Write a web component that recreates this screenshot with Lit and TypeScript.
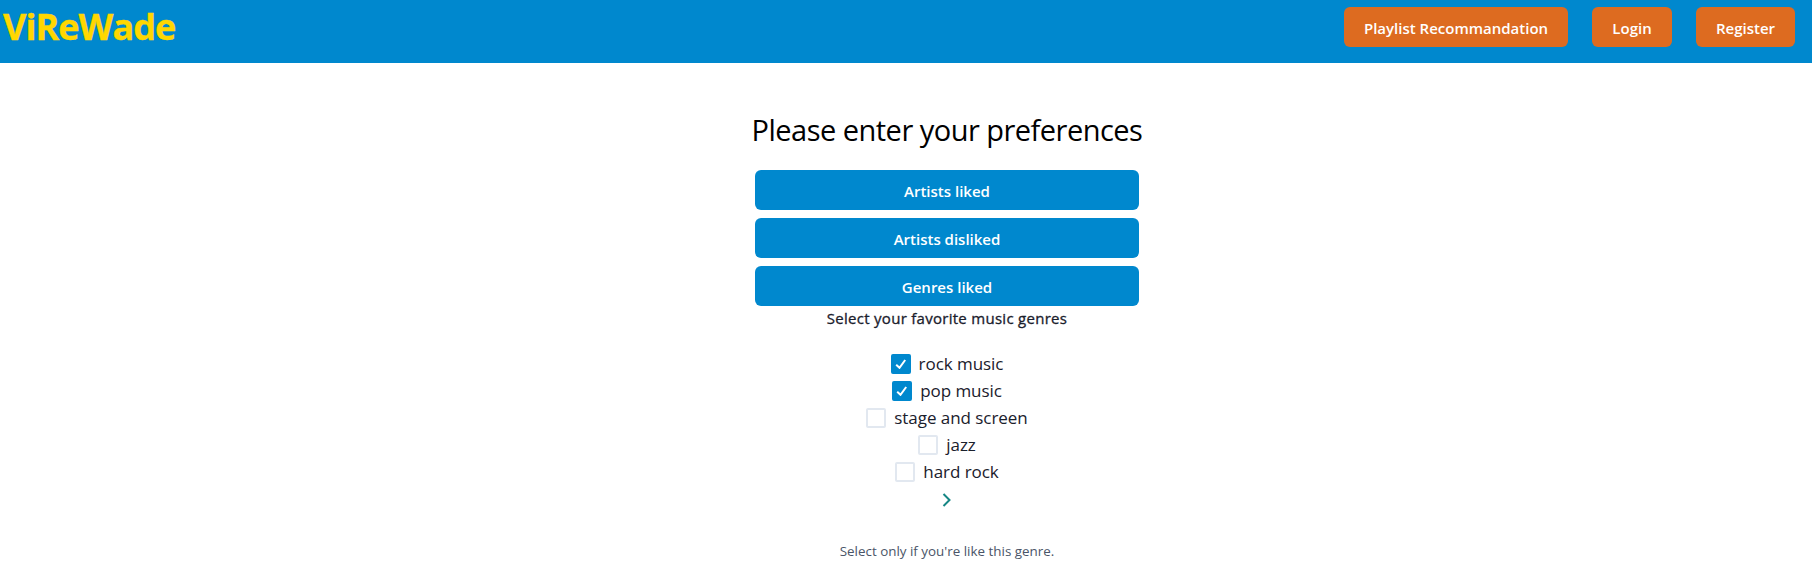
import { LitElement, html, css } from "lit";
import { customElement, property, state } from "lit/decorators.js";

@customElement("genre-checkbox")
export class GenreCheckbox extends LitElement {
  @property() label = "";
  @property({ type: Boolean, reflect: true }) checked = false;

  static styles = css`
    :host { display: block; height: 27px; }
    .row { display: inline-flex; align-items: center; height: 27px; cursor: pointer; }
    .box {
      box-sizing: border-box; width: 20px; height: 20px; flex: none;
      border: 2px solid #e2e8f0; border-radius: 2px;
      display: flex; align-items: center; justify-content: center;
    }
    :host([checked]) .box { background: #0088ce; border-color: #0088ce; }
    .tick { display: block; width: 12px; height: 10px; }
    .label { margin-left: 8px; font-size: 17px; line-height: 27px; letter-spacing: -0.05px; white-space: nowrap; color: #1a202c; }
  `;

  render() {
    return html`<label class="row" @click=${() => (this.checked = !this.checked)}>
      <span class="box">${this.checked
        ? html`<svg class="tick" viewBox="0 0 12 10" fill="none" stroke="#fff" stroke-width="2"><polyline points="1.2 5.8 4.5 8.8 10.2 1"></polyline></svg>`
        : null}</span><span class="label">${this.label}</span>
    </label>`;
  }
}

@customElement("app-root")
export class AppRoot extends LitElement {
  @state() private genres = [
    { name: "rock music", on: true },
    { name: "pop music", on: true },
    { name: "stage and screen", on: false },
    { name: "jazz", on: false },
    { name: "hard rock", on: false },
  ];

  static styles = css`
    :host {
      display: block; height: 580px; overflow: hidden; background: #fff; color: #1a202c;
      font-family: "Segoe UI", "Open Sans", sans-serif;
    }
    .bar {
      box-sizing: border-box; height: 63px; padding: 7px 17px 0 3px; background: #0088ce;
      display: flex; justify-content: space-between; align-items: flex-start;
    }
    .brand {
      font-size: 36px; line-height: 40px; font-weight: 700; letter-spacing: -0.95px; color: #ffd700;
      -webkit-text-stroke: 0.4px currentColor;
    }
    .nav { display: flex; gap: 24px; }
    button {
      font-family: inherit; font-size: 15px; font-weight: 600; line-height: 19px; color: #fff;
      border: 0; border-radius: 6px; height: 40px; padding: 2px 0 0; white-space: nowrap;
    }
    .nav button { background: #dd6b20; }
    .wide { width: 224px; }
    .login { width: 80px; }
    .register { width: 99px; }
    .main { margin-left: 82px; display: flex; flex-direction: column; align-items: center; }
    h1 { margin: 44px 0 0; font-size: 29px; line-height: 45px; font-weight: 400; letter-spacing: -0.52px; color: #000; white-space: nowrap; }
    .stack { display: flex; flex-direction: column; gap: 8px; width: 384px; margin-top: 18px; }
    .stack button { background: #0088ce; }
    .legend {
      font-size: 15px; line-height: 24px; font-weight: 500; letter-spacing: 0.28px;
      -webkit-text-stroke: 0.3px currentColor; white-space: nowrap;
    }
    .genres { margin-top: 20px; text-align: center; }
    .next { display: block; width: 24px; height: 24px; margin-top: 3px; }
    .hint { margin-top: 29px; font-size: 13.4px; line-height: 20px; color: #4a5568; white-space: nowrap; }
  `;

  render() {
    return html`
      <header class="bar">
        <div class="brand">ViReWade</div>
        <nav class="nav">
          <button class="wide">Playlist Recommandation</button>
          <button class="login">Login</button>
          <button class="register">Register</button>
        </nav>
      </header>
      <main class="main">
        <h1>Please enter your preferences</h1>
        <div class="stack">
          <button>Artists liked</button>
          <button>Artists disliked</button>
          <button>Genres liked</button>
        </div>
        <div class="legend">Select your favorite music genres</div>
        <div class="genres">
          ${this.genres.map((g) => html`<genre-checkbox .label=${g.name} ?checked=${g.on}></genre-checkbox>`)}
        </div>
        <svg class="next" viewBox="0 0 24 24" fill="none" stroke="#158684" stroke-width="2"><path d="M8.5 6 L14.5 12 L8.5 18"></path></svg>
        <div class="hint">Select only if you're like this genre.</div>
      </main>
    `;
  }
}
